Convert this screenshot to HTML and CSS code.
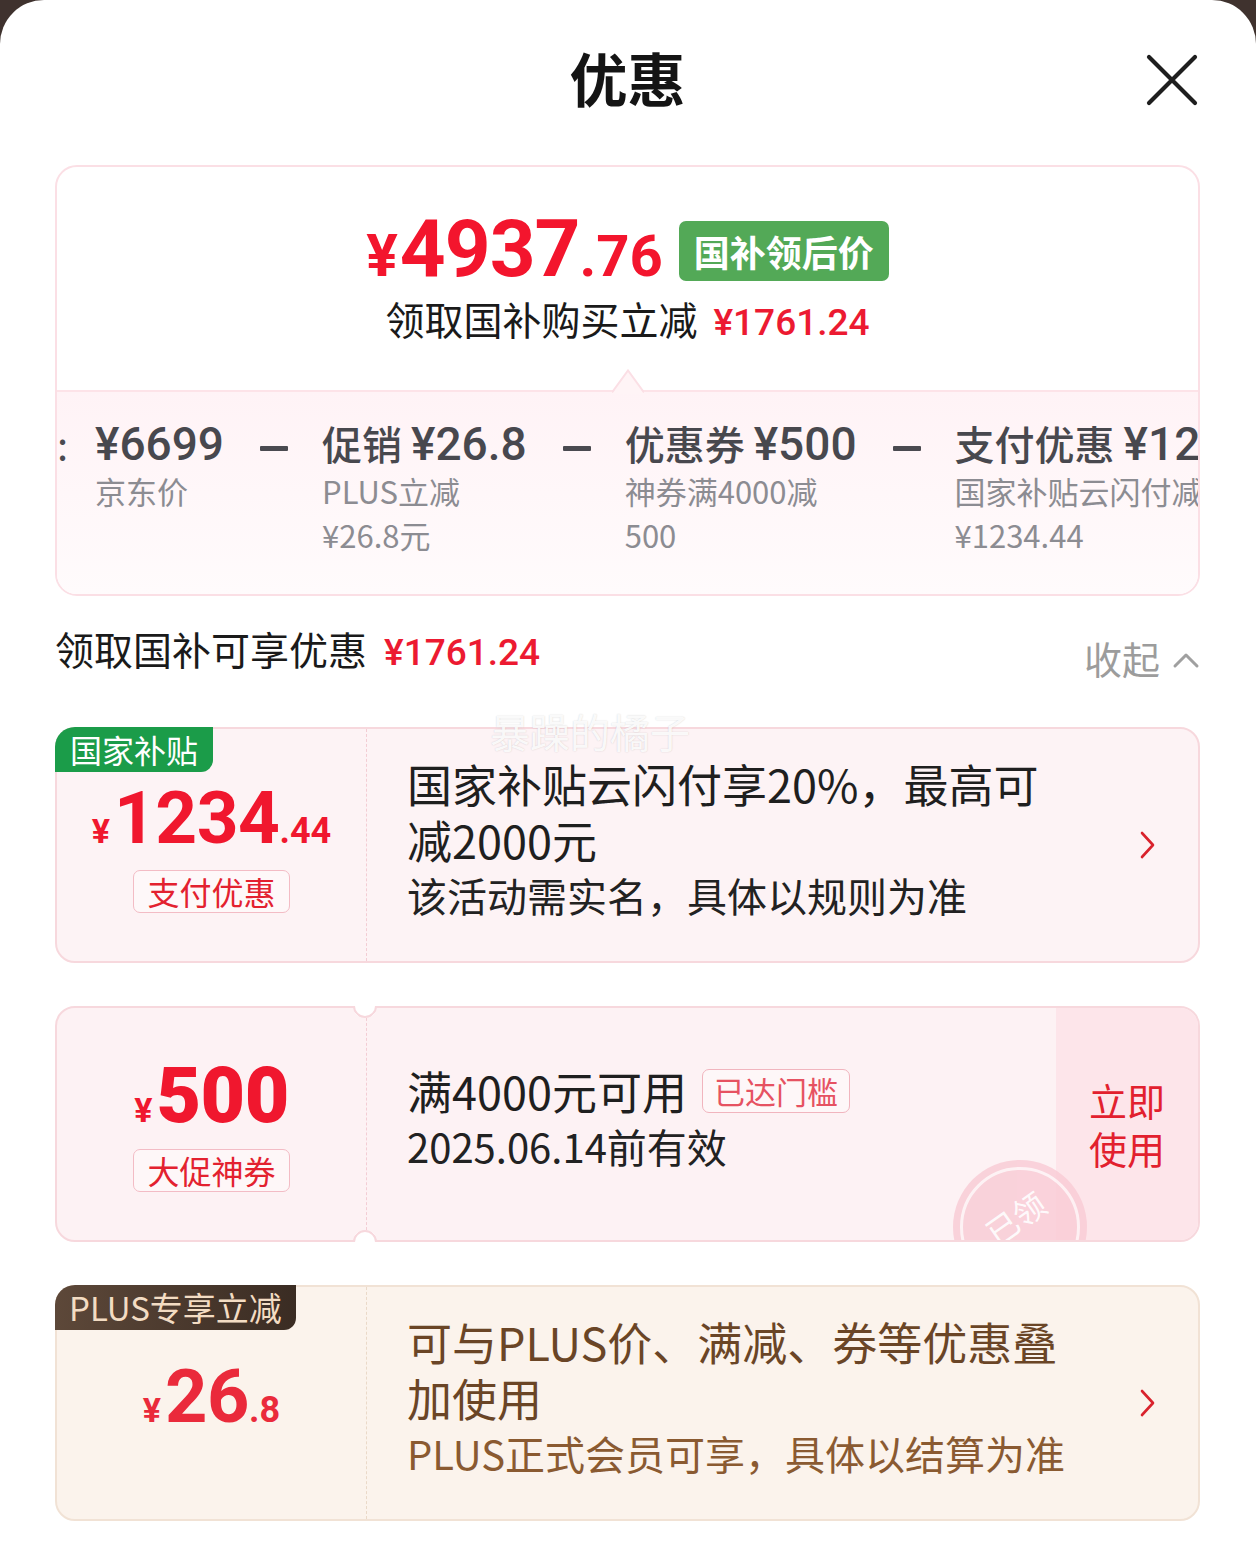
FILE: index.html
```html
<!DOCTYPE html>
<html lang="zh-CN">
<head>
<meta charset="utf-8">
<title>优惠</title>
<link rel="stylesheet" href="styles.css">
</head>
<body>
<div class="sheet">
  <header class="hd">
    <h1 class="hd-title">优惠</h1>
    <button class="hd-close" aria-label="关闭">
      <svg width="56" height="56" viewBox="0 0 56 56"><path d="M5 5 L51 51 M51 5 L5 51" stroke="#1e1e1e" stroke-width="4.2" stroke-linecap="round" fill="none"/></svg>
    </button>
  </header>

  <section class="sum">
    <div class="sum-top">
      <div class="sum-price">
        <span class="p-price"><span class="yen">¥</span><span class="int">4937</span><span class="dec">.76</span></span>
        <span class="p-badge">国补领后价</span>
      </div>
      <div class="sum-save">领取国补购买立减<span class="num">¥1761.24</span></div>
    </div>
    <div class="sum-bottom">
      <svg class="tri" width="32" height="25" viewBox="0 0 32 25"><polygon points="0,25 16,1.5 32,25" fill="#fff4f6"/><polyline points="0,23.5 16,1.5 32,23.5" fill="none" stroke="#fbdfe5" stroke-width="2"/></svg>
      <div class="calc">
        <span class="calc-colon">:</span>
        <div class="ci">
          <div class="ci-t"><span class="num">¥6699</span></div>
          <div class="ci-s">京东价</div>
        </div>
        <span class="calc-op"></span>
        <div class="ci">
          <div class="ci-t">促销 <span class="num">¥26.8</span></div>
          <div class="ci-s">PLUS立减¥26.8元</div>
        </div>
        <span class="calc-op"></span>
        <div class="ci">
          <div class="ci-t">优惠券 <span class="num">¥500</span></div>
          <div class="ci-s">神券满4000减500</div>
        </div>
        <span class="calc-op"></span>
        <div class="ci">
          <div class="ci-t">支付优惠 <span class="num">¥1234.44</span></div>
          <div class="ci-s">国家补贴云闪付减¥1234.44</div>
        </div>
      </div>
    </div>
  </section>

  <div class="sec-hd">
    <div class="sec-title">领取国补可享优惠<span class="num">¥1761.24</span></div>
    <div class="sec-toggle">收起
      <svg width="28" height="18" viewBox="0 0 28 18"><polyline points="3,15 14,4 25,15" fill="none" stroke="#a0a0a0" stroke-width="3" stroke-linecap="round" stroke-linejoin="round"/></svg>
    </div>
  </div>

  <div class="cards">
    <div class="card">
      <div class="card-body pink">
        <span class="c-badge green">国家补贴</span>
        <div class="c-left">
          <div class="c-price"><span class="yen">¥</span><span class="int">1234</span><span class="dec">.44</span></div>
          <span class="c-tag">支付优惠</span>
        </div>
        <div class="c-main">
          <div class="c-title">国家补贴云闪付享20%，最高可减2000元</div>
          <div class="c-sub">该活动需实名，具体以规则为准</div>
        </div>
        <div class="c-arrow">
          <svg width="18" height="30" viewBox="0 0 18 30"><polyline points="3,3 14,15 3,27" fill="none" stroke="#d9222c" stroke-width="2.6" stroke-linecap="round" stroke-linejoin="round"/></svg>
        </div>
      </div>
    </div>

    <div class="card">
      <div class="card-body pink coupon">
        <div class="c-left">
          <div class="c-price big"><span class="yen">¥</span><span class="int">500</span></div>
          <span class="c-tag">大促神券</span>
        </div>
        <div class="c-main">
          <div class="c-line1">满4000元可用<span class="c-tag2">已达门槛</span></div>
          <div class="c-sub">2025.06.14前有效</div>
        </div>
        <div class="c-action">立即<br>使用</div>
        <div class="stamp"><span>已领</span></div>
      </div>
      <span class="notch top"></span>
      <span class="notch bottom"></span>
    </div>

    <div class="card">
      <div class="card-body cream">
        <span class="c-badge plus">PLUS专享立减</span>
        <div class="c-left">
          <div class="c-price plusp"><span class="yen">¥</span><span class="int">26</span><span class="dec">.8</span></div>
        </div>
        <div class="c-main">
          <div class="c-title brown">可与PLUS价、满减、券等优惠叠加使用</div>
          <div class="c-sub brown2">PLUS正式会员可享，具体以结算为准</div>
        </div>
        <div class="c-arrow">
          <svg width="18" height="30" viewBox="0 0 18 30"><polyline points="3,3 14,15 3,27" fill="none" stroke="#d9222c" stroke-width="2.6" stroke-linecap="round" stroke-linejoin="round"/></svg>
        </div>
      </div>
    </div>
  </div>

  <div class="watermark">暴躁的橘子</div>
</div>
</body>
</html>
```

FILE: styles.css
```css
* { box-sizing: border-box; }
html, body { margin: 0; padding: 0; }
body {
  background: #3f322e;
  font-family: "Noto Sans CJK SC", "Noto Sans", sans-serif;
  color: #1c1c1c;
}
.sheet {
  position: relative;
  width: 1256px;
  min-height: 1559px;
  background: #fff;
  border-radius: 44px 44px 0 0;
  padding: 0 56px 40px 55px;
}

/* header */
.hd {
  display: grid;
  grid-template-columns: 1fr auto 1fr;
  height: 165px;
  align-items: start;
}
.hd-title {
  grid-column: 2;
  margin: 0;
  font-size: 58px;
  font-weight: 700;
  line-height: 154px;
  color: #141414;
}
.hd-close {
  grid-column: 3;
  justify-self: end;
  margin-top: 52px;
  width: 56px;
  height: 56px;
  padding: 0;
  border: 0;
  background: none;
}
.hd-close svg { display: block; }

/* summary */
.sum {
  border: 2px solid #fbdfe5;
  border-radius: 22px;
  overflow: hidden;
}
.sum-top {
  height: 223px;
  padding-top: 49px;
  display: flex;
  flex-direction: column;
  align-items: center;
}
.sum-price {
  display: flex;
  align-items: center;
  height: 70px;
  gap: 16px;
}
.p-price {
  padding-top: 18px;
  color: #f3152d;
  font-family: Roboto, sans-serif;
  font-weight: 700;
  line-height: 70px;
  white-space: nowrap;
}
.p-price .yen { font-size: 59px; margin-right: 2px; }
.p-price .int { font-size: 80px; letter-spacing: -1px; }
.p-price .dec { font-size: 58px; }
.p-badge {
  height: 60px;
  line-height: 60px;
  padding: 0 15px;
  border-radius: 7px;
  background: #53a957;
  color: #fff;
  font-size: 36px;
  font-weight: 700;
}
.sum-save {
  margin-top: 7px;
  height: 50px;
  line-height: 50px;
  font-size: 39px;
  color: #1a1a1a;
  display: flex;
  align-items: baseline;
  gap: 16px;
}
.sum-save .num, .sec-title .num {
  font-family: Roboto, sans-serif;
  font-weight: 500;
  font-size: 37px;
  color: #ec1a31;
}
.sum-bottom {
  position: relative;
  height: 204px;
  border-top: 2px solid #fde3e8;
  background: linear-gradient(#fff3f6, #fffbfc);
}
.tri {
  position: absolute;
  left: 555px;
  top: -23px;
}
.calc {
  display: flex;
  align-items: flex-start;
  padding-top: 26px;
}
.calc-colon {
  flex: none;
  width: 38px;
  font-size: 40px;
  line-height: 50px;
  color: #4a4a50;
}
.ci { flex: none; }
.ci-t {
  font-size: 40px;
  line-height: 50px;
  color: #48484e;
  white-space: nowrap;
  font-weight: 500;
}
.ci-t .num {
  font-family: Roboto, sans-serif;
  font-size: 46px;
  font-weight: 500;
}
.ci-s {
  width: 0;
  min-width: 100%;
  font-size: 31px;
  line-height: 44px;
  color: #8c8c92;
}
.calc-op {
  flex: none;
  width: 28px;
  height: 5px;
  margin: 28px 34px 0 36px;
  background: #4a4a50;
  border-radius: 1px;
}

/* section header */
.sec-hd {
  display: flex;
  justify-content: space-between;
  align-items: center;
  height: 50px;
  margin-top: 29px;
}
.sec-title {
  display: flex;
  align-items: baseline;
  gap: 17px;
  font-size: 39px;
  line-height: 50px;
  color: #1a1a1a;
}
.sec-toggle {
  display: flex;
  align-items: center;
  gap: 12px;
  padding-top: 16px;
  font-size: 38px;
  line-height: 50px;
  color: #9c9c9c;
}
.sec-toggle svg { margin-top: 4px; }

/* cards */
.cards {
  margin-top: 52px;
  display: flex;
  flex-direction: column;
  gap: 43px;
}
.card {
  position: relative;
  height: 236px;
}
.card-body {
  position: relative;
  height: 100%;
  border: 2px solid #f7d8dd;
  border-radius: 20px;
  display: grid;
  grid-template-columns: 310px 1fr 100px;
}
.card-body.pink { background: #fdf3f5; }
.card-body.coupon {
  grid-template-columns: 310px 1fr 142px;
  overflow: hidden;
  background: #fdf2f4;
}
.card-body.cream {
  background: #fbf3ec;
  border-color: #f1e2d5;
}
.c-badge {
  position: absolute;
  top: -2px;
  left: -2px;
  height: 45px;
  line-height: 45px;
  padding: 0 15px;
  border-radius: 20px 0 12px 0;
  font-size: 32px;
  color: #fff;
  z-index: 2;
}
.c-badge.green { background: #1b9c49; }
.c-badge.plus {
  background: linear-gradient(90deg, #5d4839, #3a2c23);
  color: #f3dcc3;
  font-size: 33px;
  padding: 0 14px;
}
.c-left {
  display: flex;
  flex-direction: column;
  align-items: center;
  justify-content: center;
  padding-top: 8px;
  border-right: 1.5px dashed #f3cdd4;
}
.cream .c-left { border-right-color: #ead9c8; }
.c-price {
  font-family: Roboto, sans-serif;
  font-weight: 700;
  line-height: 64px;
  color: #f0172e;
  white-space: nowrap;
}
.c-price .yen { font-size: 34px; margin-right: 4px; }
.c-price .int { font-size: 73px; letter-spacing: -0.5px; }
.c-price .dec { font-size: 36px; }
.c-price.big .int { font-size: 77px; font-weight: 900; }
.c-price.plusp { color: #ea2a3b; }
.c-price.plusp .int { font-size: 74px; }
.c-price.plusp .dec { font-size: 36px; }
.c-tag {
  margin-top: 0;
  height: 43px;
  line-height: 40px;
  padding: 0 13px;
  border: 1.5px solid #f3bcc5;
  border-radius: 7px;
  background: rgba(255, 255, 255, 0.4);
  color: #e3212f;
  font-size: 32px;
}
.c-main {
  display: flex;
  flex-direction: column;
  justify-content: center;
  padding: 0 0 12px 40px;
}
.c-title {
  max-width: 662px;
  font-size: 45px;
  line-height: 56px;
  color: #1f1f1f;
}
.c-sub {
  font-size: 40px;
  line-height: 55px;
  color: #222;
  white-space: nowrap;
}
.c-title.brown { color: #6a4526; }
.c-sub.brown2 { color: #8a5a31; }
.c-line1 {
  display: flex;
  align-items: center;
  font-size: 45px;
  line-height: 56px;
  color: #1f1f1f;
}
.c-tag2 {
  margin-left: 15px;
  height: 44px;
  line-height: 41px;
  padding: 0 11px;
  border: 1.5px solid #f1b5be;
  border-radius: 7px;
  background: rgba(255, 255, 255, 0.4);
  color: #e65262;
  font-size: 31px;
}
.c-arrow {
  display: flex;
  align-items: center;
  justify-content: center;
}
.c-action {
  display: flex;
  align-items: center;
  justify-content: center;
  text-align: center;
  background: #fde5ea;
  color: #e2202e;
  font-size: 38px;
  line-height: 48px;
}
.stamp {
  position: absolute;
  left: 896px;
  top: 152px;
  width: 134px;
  height: 134px;
  border-radius: 50%;
  background: #f9cdd6;
  opacity: 0.85;
}
.stamp::before {
  content: "";
  position: absolute;
  inset: 7px;
  border-radius: 50%;
  border: 3px solid rgba(255, 255, 255, 0.75);
}
.stamp span {
  position: absolute;
  left: 30px;
  top: 34px;
  font-size: 32px;
  color: rgba(255, 255, 255, 0.95);
  transform: rotate(-35deg);
}
.notch {
  position: absolute;
  left: 298px;
  width: 24px;
  height: 24px;
  border-radius: 50%;
  background: #fff;
  border: 2px solid #f7d8dd;
  transform: rotate(-45deg);
}
.notch.top {
  top: -12px;
  border-top-color: transparent;
  border-right-color: transparent;
}
.notch.bottom {
  bottom: -12px;
  border-bottom-color: transparent;
  border-left-color: transparent;
}

.watermark {
  position: absolute;
  left: 490px;
  top: 706px;
  font-size: 40px;
  line-height: 50px;
  color: rgba(255, 255, 255, 0.9);
  text-shadow: 0 0 1.5px rgba(0, 0, 0, 0.18);
  pointer-events: none;
  z-index: 5;
}
```
